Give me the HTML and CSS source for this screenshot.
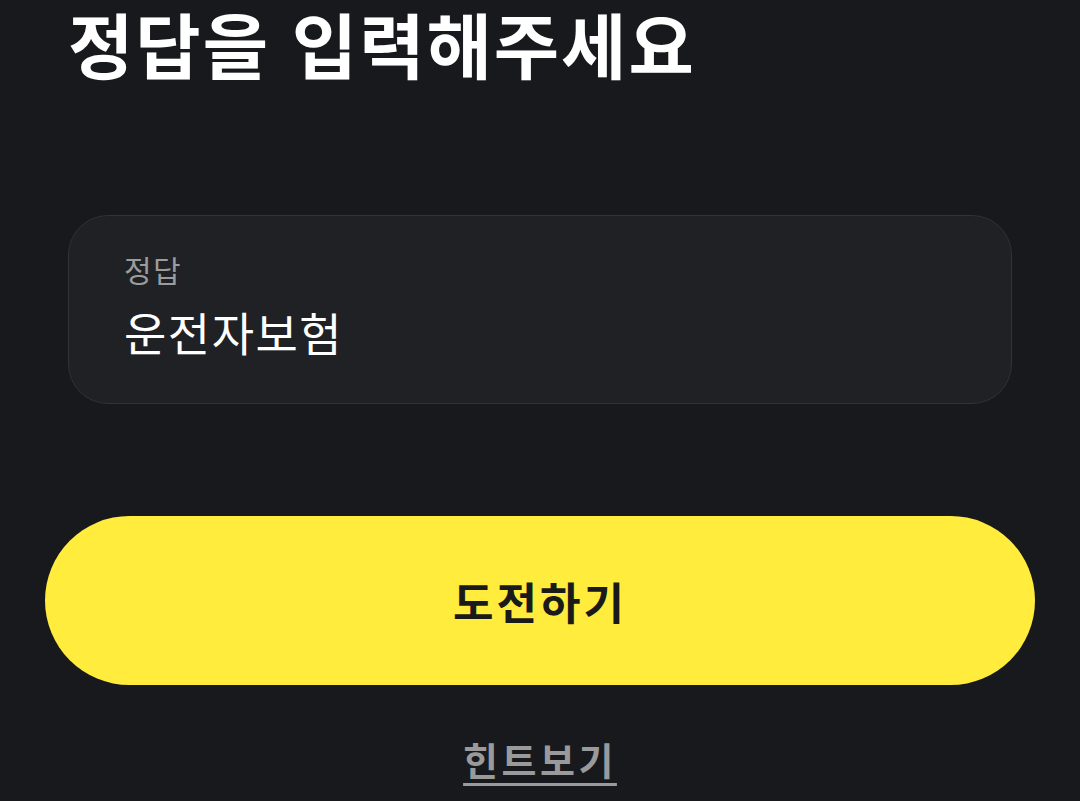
FILE: index.html
```html
<!DOCTYPE html>
<html lang="ko">
<head>
<meta charset="utf-8">
<link rel="stylesheet" href="styles.css">
</head>
<body>
<main class="page">
  <h1 class="title">정답을 입력해주세요</h1>
  <div class="field">
    <div class="field-label">정답</div>
    <div class="field-value">운전자보험</div>
  </div>
  <button class="submit">도전하기</button>
  <a class="hint">힌트보기</a>
</main>
</body>
</html>
```
FILE: styles.css
```css
html, body {
  margin: 0;
  padding: 0;
  background: #17191c;
  height: 100%;
  overflow: hidden;
}
.page {
  font-family: "Noto Sans CJK KR", "Noto Sans", sans-serif;
  display: flex;
  flex-direction: column;
  padding: 0 45px;
}
.title {
  margin: 3px 0 0 23px;
  font-size: 71px;
  line-height: 1.1;
  font-weight: 700;
  color: #ffffff;
  letter-spacing: 2px;
}
.field {
  margin: 134px 23px 0 23px;
  height: 187px;
  border: 1px solid #2f3236;
  border-radius: 40px;
  background: #1f2124;
  padding: 0 55px;
  display: flex;
  flex-direction: column;
}
.field-label {
  margin-top: 38px;
  font-size: 30px;
  line-height: 1;
  color: #9b9c9e;
  letter-spacing: 1.5px;
}
.field-value {
  margin-top: 24px;
  font-size: 46px;
  line-height: 1;
  color: #ffffff;
  letter-spacing: 1.5px;
}
.submit {
  margin-top: 112px;
  height: 169px;
  border: none;
  border-radius: 85px;
  background: #ffec3d;
  font-family: inherit;
  font-size: 44px;
  font-weight: 700;
  color: #1a1a1a;
  padding: 0;
  letter-spacing: 3px;
}
.hint {
  align-self: center;
  margin-top: 55px;
  font-size: 38px;
  line-height: 1;
  font-weight: 700;
  color: #9a9a9b;
  letter-spacing: 3.5px;
  text-decoration: underline;
  text-underline-offset: 8px;
  text-decoration-thickness: 3px;
}
```
